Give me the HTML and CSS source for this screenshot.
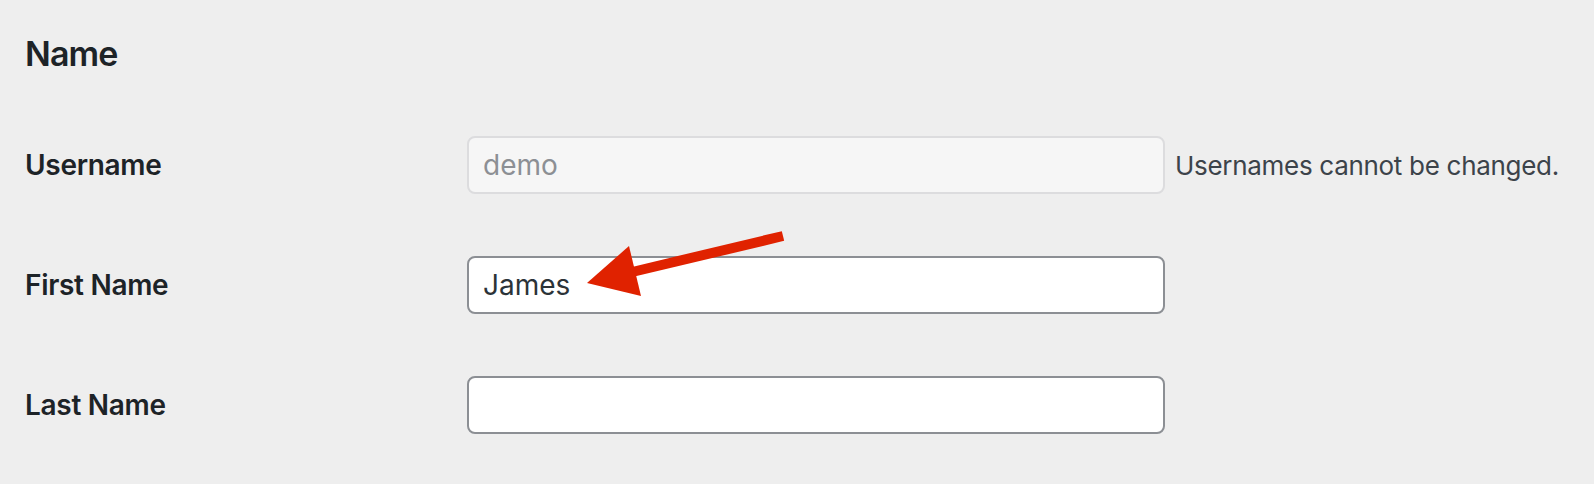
FILE: index.html
```html
<html>
<head>
<link rel="stylesheet" href="styles.css">
</head>
<body>

<div class="page">

	<h2 class="section-title">Name</h2>

	<div class="form-table">
		<label class="field-label" for="user_login">Username</label>
		<div class="field">
			<input type="text" id="user_login" class="regular-text" value="demo" disabled>
			<span class="description">Usernames cannot be changed.</span>
		</div>

		<label class="field-label" for="first_name">First Name</label>
		<div class="field">
			<input type="text" id="first_name" class="regular-text" value="James">
		</div>

		<label class="field-label" for="last_name">Last Name</label>
		<div class="field">
			<input type="text" id="last_name" class="regular-text" value="">
		</div>
	</div>

</div>

<!-- annotation arrow drawn over the form -->
<svg class="annotation" width="1594" height="484" viewBox="0 0 1594 484">
	<line x1="783" y1="236" x2="628" y2="273" stroke="#e02200" stroke-width="10"/>
	<polygon points="587,283 629,246 641,296" fill="#e02200"/>
</svg>

</body>
</html>
```

FILE: styles.css
```css
body{
	margin:0;
	background-color:#eeeeee;
	font-family:'Inter','Noto Sans',sans-serif;
	color:#1d2327;
}
.page{
	padding-left:25px;
}
.section-title{
	margin:36px 0 0 0;
	font-size:34px;
	line-height:36px;
	font-weight:600;
	letter-spacing:-0.9px;
}
.form-table{
	display:grid;
	grid-template-columns:442px 1fr;
	row-gap:62px;
	margin-top:64px;
	align-items:center;
}
.field-label{
	font-size:28px;
	font-weight:600;
	line-height:58px;
	letter-spacing:-0.3px;
}
.field{
	display:flex;
	align-items:center;
	height:58px;
}
.regular-text{
	box-sizing:border-box;
	width:698px;
	height:58px;
	border:2px solid #8c8f94;
	border-radius:8px;
	padding:0 14px;
	background-color:#ffffff;
	font-family:'Inter','Noto Sans',sans-serif;
	font-size:28px;
	color:#2c3338;
	outline:none;
}
.regular-text:disabled{
	background-color:#f6f6f6;
	border-color:#dcdcde;
	color:#8c8f94;
}
.description{
	margin-left:10px;
	font-size:26px;
	letter-spacing:-0.3px;
	color:#3c434a;
}
.annotation{
	position:absolute;
	top:0;
	left:0;
	pointer-events:none;
}
```
